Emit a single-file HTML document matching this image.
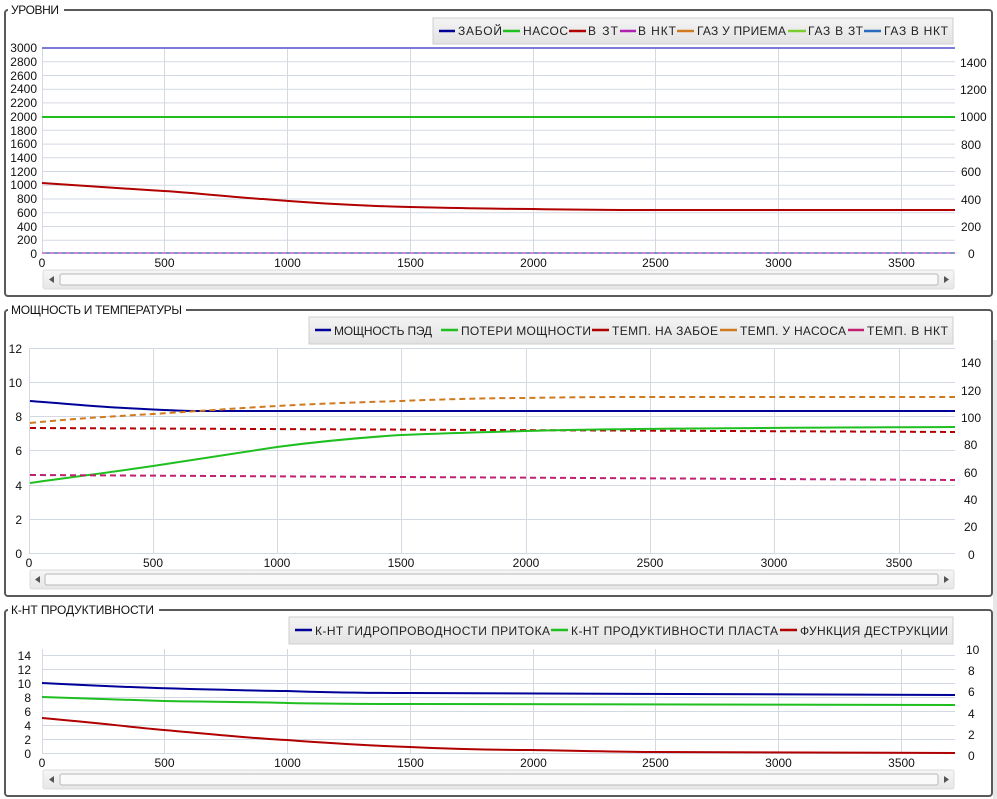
<!DOCTYPE html>
<html><head><meta charset="utf-8"><style>
html,body{margin:0;padding:0;background:#fff;}
svg{display:block;font-family:"Liberation Sans","DejaVu Sans",sans-serif;}
</style></head><body>
<svg width="997" height="799" viewBox="0 0 997 799" xmlns="http://www.w3.org/2000/svg">
<defs>
<linearGradient id="lg" x1="0" y1="0" x2="0" y2="1"><stop offset="0" stop-color="#f4f4f4"/><stop offset="1" stop-color="#e2e2e2"/></linearGradient>
<linearGradient id="sb" x1="0" y1="0" x2="0" y2="1"><stop offset="0" stop-color="#f6f6f6"/><stop offset="1" stop-color="#e6e6e6"/></linearGradient>
</defs>
<rect x="993" y="340" width="4" height="459" fill="#e8e8e8"/>

<!-- PANEL 1 -->
<rect x="5" y="10" width="987" height="286" rx="3" fill="none" stroke="#5a5a5a" stroke-width="2"/>
<rect x="8" y="2" width="56" height="14" fill="#fff"/>
<text x="11" y="14" font-size="12" fill="#111" textLength="48">УРОВНИ</text>
<g stroke="#d3d9e3" stroke-width="1">
<line x1="42" y1="61.7" x2="955" y2="61.7"/><line x1="42" y1="75.5" x2="955" y2="75.5"/><line x1="42" y1="89.2" x2="955" y2="89.2"/><line x1="42" y1="102.9" x2="955" y2="102.9"/><line x1="42" y1="130.3" x2="955" y2="130.3"/><line x1="42" y1="144.1" x2="955" y2="144.1"/><line x1="42" y1="157.8" x2="955" y2="157.8"/><line x1="42" y1="171.5" x2="955" y2="171.5"/><line x1="42" y1="185.3" x2="955" y2="185.3"/><line x1="42" y1="199" x2="955" y2="199"/><line x1="42" y1="212.7" x2="955" y2="212.7"/><line x1="42" y1="226.5" x2="955" y2="226.5"/><line x1="42" y1="240.2" x2="955" y2="240.2"/>
<line x1="164.5" y1="48" x2="164.5" y2="254"/><line x1="287.5" y1="48" x2="287.5" y2="254"/><line x1="410.5" y1="48" x2="410.5" y2="254"/><line x1="533.5" y1="48" x2="533.5" y2="254"/><line x1="655.5" y1="48" x2="655.5" y2="254"/><line x1="778.5" y1="48" x2="778.5" y2="254"/><line x1="901.5" y1="48" x2="901.5" y2="254"/>
<line x1="42.5" y1="48" x2="42.5" y2="254"/>
</g>
<line x1="42" y1="48" x2="955" y2="48" stroke="#7b7bdc" stroke-width="2"/>
<line x1="42" y1="117" x2="955" y2="117" stroke="#1fbf1f" stroke-width="2"/>
<line x1="42" y1="253" x2="955" y2="253" stroke="#4a78a8" stroke-width="1.5"/>
<line x1="42" y1="253" x2="955" y2="253" stroke="#e070e0" stroke-width="1.5" stroke-dasharray="4 4"/>
<path d="M42,183 C100,187 130,189 164,191 S240,198 263,199 C300,202 360,206 410,207 C460,208 500,209 533,209 C580,210 620,210 655,210 L955,210" fill="none" stroke="#b00000" stroke-width="2"/>
<g font-size="12" fill="#111" text-anchor="end">
<text x="37" y="52">3000</text><text x="37" y="66">2800</text><text x="37" y="80">2600</text><text x="37" y="93">2400</text><text x="37" y="107">2200</text><text x="37" y="121">2000</text><text x="37" y="135">1800</text><text x="37" y="148">1600</text><text x="37" y="162">1400</text><text x="37" y="176">1200</text><text x="37" y="189">1000</text><text x="37" y="203">800</text><text x="37" y="217">600</text><text x="37" y="231">400</text><text x="37" y="244">200</text><text x="37" y="258">0</text>
</g>
<g font-size="12" fill="#111" text-anchor="middle">
<text x="42" y="267">0</text><text x="164.5" y="267">500</text><text x="287.5" y="267">1000</text><text x="410.5" y="267">1500</text><text x="533.5" y="267">2000</text><text x="655.5" y="267">2500</text><text x="778.5" y="267">3000</text><text x="901.5" y="267">3500</text>
</g>
<g font-size="12" fill="#111">
<text x="960" y="67">1400</text><text x="960" y="94">1200</text><text x="960" y="121">1000</text><text x="961" y="149">800</text><text x="961" y="176">600</text><text x="961" y="204">400</text><text x="961" y="231">200</text><text x="968" y="258">0</text>
</g>
<rect x="43" y="270" width="911" height="19" rx="2" fill="url(#sb)" stroke="#dcdcdc"/>
<rect x="60" y="274" width="878" height="11" rx="2" fill="#fafafa" stroke="#b8b8b8"/>
<path d="M54,276 L49,279.5 L54,283 Z" fill="#555"/><path d="M944,276 L949,279.5 L944,283 Z" fill="#555"/>
<rect x="433" y="18" width="520" height="26" fill="url(#lg)" stroke="#cfcfcf"/>
<g stroke-width="2.5">
<line x1="439" y1="31" x2="455" y2="31" stroke="#000099"/><line x1="503" y1="31" x2="520" y2="31" stroke="#1fbf1f"/><line x1="569" y1="31" x2="586" y2="31" stroke="#b00000"/><line x1="620" y1="31" x2="636" y2="31" stroke="#b020b0"/><line x1="677" y1="31" x2="694" y2="31" stroke="#d07a20"/><line x1="788" y1="31" x2="806" y2="31" stroke="#7acc30"/><line x1="864" y1="31" x2="881" y2="31" stroke="#2a6aba"/>
</g>
<g font-size="12" fill="#222">
<text x="458" y="35" textLength="44">ЗАБОЙ</text><text x="523" y="35" textLength="45">НАСОС</text><text x="588" y="35" textLength="30">В ЗТ</text><text x="638" y="35" textLength="38">В НКТ</text><text x="697" y="35" textLength="89">ГАЗ У ПРИЕМА</text><text x="808" y="35" textLength="55">ГАЗ В ЗТ</text><text x="884" y="35" textLength="64">ГАЗ В НКТ</text>
</g>

<!-- PANEL 2 -->
<rect x="5" y="310" width="987" height="286" rx="3" fill="none" stroke="#5a5a5a" stroke-width="2"/>
<rect x="8" y="302" width="178" height="14" fill="#fff"/>
<text x="11" y="314" font-size="12" fill="#111" textLength="171">МОЩНОСТЬ И ТЕМПЕРАТУРЫ</text>
<g stroke="#d3d9e3" stroke-width="1">
<line x1="29" y1="348.5" x2="955" y2="348.5"/><line x1="29" y1="382.5" x2="955" y2="382.5"/><line x1="29" y1="416.5" x2="955" y2="416.5"/><line x1="29" y1="450.5" x2="955" y2="450.5"/><line x1="29" y1="485.5" x2="955" y2="485.5"/><line x1="29" y1="519.5" x2="955" y2="519.5"/>
<line x1="29.5" y1="348" x2="29.5" y2="553"/><line x1="153.5" y1="348" x2="153.5" y2="553"/><line x1="277.5" y1="348" x2="277.5" y2="553"/><line x1="401.5" y1="348" x2="401.5" y2="553"/><line x1="526.5" y1="348" x2="526.5" y2="553"/><line x1="650.5" y1="348" x2="650.5" y2="553"/><line x1="774.5" y1="348" x2="774.5" y2="553"/><line x1="899.5" y1="348" x2="899.5" y2="553"/>
</g>
<line x1="29" y1="553.5" x2="955" y2="553.5" stroke="#d3d9e3"/>
<path d="M30,401 C70,404 100,407 125,408 C160,410 180,411 200,411 L955,411" fill="none" stroke="#000099" stroke-width="2"/>
<path d="M30,423 C80,418 120,416 153,414 C200,411 240,408 277,406 C330,403 370,402 401,401 C450,399 490,398 525,398 C580,397 620,397 650,397 L955,397" fill="none" stroke="#d07a20" stroke-width="2" stroke-dasharray="6 4"/>
<path d="M30,428 L955,432" fill="none" stroke="#b00000" stroke-width="2" stroke-dasharray="6 4"/>
<path d="M30,483 C80,476 120,471 153,466 C200,459 240,453 277,447 C330,440 370,437 401,435 C450,433 490,432 525,431 C600,429 700,428 955,427" fill="none" stroke="#1fbf1f" stroke-width="2"/>
<path d="M30,475 L955,480" fill="none" stroke="#c02070" stroke-width="2" stroke-dasharray="6 4"/>
<g font-size="12" fill="#111" text-anchor="end">
<text x="22" y="353">12</text><text x="22" y="387">10</text><text x="22" y="421">8</text><text x="22" y="455">6</text><text x="22" y="490">4</text><text x="22" y="524">2</text><text x="22" y="558">0</text>
</g>
<g font-size="12" fill="#111" text-anchor="middle">
<text x="29" y="567">0</text><text x="153" y="567">500</text><text x="277" y="567">1000</text><text x="401" y="567">1500</text><text x="526" y="567">2000</text><text x="650" y="567">2500</text><text x="774" y="567">3000</text><text x="899" y="567">3500</text>
</g>
<g font-size="12" fill="#111">
<text x="961" y="367">140</text><text x="961" y="395">120</text><text x="961" y="422">100</text><text x="964" y="449">80</text><text x="964" y="477">60</text><text x="964" y="504">40</text><text x="964" y="531">20</text><text x="968" y="559">0</text>
</g>
<rect x="30" y="570" width="924" height="19" rx="2" fill="url(#sb)" stroke="#dcdcdc"/>
<rect x="45" y="574" width="893" height="11" rx="2" fill="#fafafa" stroke="#b8b8b8"/>
<path d="M40,576 L35,579.5 L40,583 Z" fill="#555"/><path d="M944,576 L949,579.5 L944,583 Z" fill="#555"/>
<rect x="309" y="317" width="644" height="27" fill="url(#lg)" stroke="#cfcfcf"/>
<g stroke-width="2.5">
<line x1="315" y1="330" x2="331" y2="330" stroke="#000099"/><line x1="441" y1="330" x2="458" y2="330" stroke="#1fbf1f"/><line x1="592" y1="330" x2="609" y2="330" stroke="#b00000"/><line x1="720" y1="330" x2="737" y2="330" stroke="#d07a20"/><line x1="848" y1="330" x2="864" y2="330" stroke="#c02070"/>
</g>
<g font-size="12" fill="#222">
<text x="334" y="335" textLength="98">МОЩНОСТЬ ПЭД</text><text x="461" y="335" textLength="130">ПОТЕРИ МОЩНОСТИ</text><text x="612" y="335" textLength="106">ТЕМП. НА ЗАБОЕ</text><text x="740" y="335" textLength="106">ТЕМП. У НАСОСА</text><text x="867" y="335" textLength="81">ТЕМП. В НКТ</text>
</g>

<!-- PANEL 3 -->
<rect x="5" y="610" width="987" height="186" rx="3" fill="none" stroke="#5a5a5a" stroke-width="2"/>
<rect x="8" y="602" width="151" height="14" fill="#fff"/>
<text x="11" y="614" font-size="12" fill="#111" textLength="143">К-НТ ПРОДУКТИВНОСТИ</text>
<g stroke="#d3d9e3" stroke-width="1">
<line x1="42" y1="655.5" x2="955" y2="655.5"/><line x1="42" y1="669.5" x2="955" y2="669.5"/><line x1="42" y1="683.5" x2="955" y2="683.5"/><line x1="42" y1="697.5" x2="955" y2="697.5"/><line x1="42" y1="711.5" x2="955" y2="711.5"/><line x1="42" y1="725.5" x2="955" y2="725.5"/><line x1="42" y1="739.5" x2="955" y2="739.5"/><line x1="42" y1="753.5" x2="955" y2="753.5"/>
<line x1="42.5" y1="649" x2="42.5" y2="754"/><line x1="164.5" y1="649" x2="164.5" y2="754"/><line x1="287.5" y1="649" x2="287.5" y2="754"/><line x1="410.5" y1="649" x2="410.5" y2="754"/><line x1="533.5" y1="649" x2="533.5" y2="754"/><line x1="655.5" y1="649" x2="655.5" y2="754"/><line x1="778.5" y1="649" x2="778.5" y2="754"/><line x1="901.5" y1="649" x2="901.5" y2="754"/>
</g>
<path d="M42,683 C100,686 150,688 190,689 C240,690 260,691 287,691 C340,693 380,693 410,693 C500,694 700,694 955,695" fill="none" stroke="#000099" stroke-width="2"/>
<path d="M42,697 C100,699 140,700 164,701 C220,702 260,702 287,703 C340,704 380,704 410,704 C500,704 700,705 955,705" fill="none" stroke="#1fbf1f" stroke-width="2"/>
<path d="M42,718 C100,723 130,727 164,730 C220,735 260,739 287,740 C340,744 380,746 410,747 C450,749 490,750 533,750 C580,751 620,752 655,752 L955,753" fill="none" stroke="#b00000" stroke-width="2"/>
<g font-size="12" fill="#111" text-anchor="end">
<text x="31" y="660">14</text><text x="31" y="674">12</text><text x="31" y="688">10</text><text x="31" y="702">8</text><text x="31" y="716">6</text><text x="31" y="730">4</text><text x="31" y="744">2</text><text x="31" y="758">0</text>
</g>
<g font-size="12" fill="#111" text-anchor="middle">
<text x="42" y="767">0</text><text x="164.5" y="767">500</text><text x="287.5" y="767">1000</text><text x="410.5" y="767">1500</text><text x="533.5" y="767">2000</text><text x="655.5" y="767">2500</text><text x="778.5" y="767">3000</text><text x="901.5" y="767">3500</text>
</g>
<g font-size="12" fill="#111">
<text x="966" y="654">10</text><text x="968" y="675">8</text><text x="968" y="696">6</text><text x="968" y="718">4</text><text x="968" y="739">2</text><text x="968" y="760">0</text>
</g>
<rect x="43" y="770" width="911" height="19" rx="2" fill="url(#sb)" stroke="#dcdcdc"/>
<rect x="60" y="774" width="878" height="11" rx="2" fill="#fafafa" stroke="#b8b8b8"/>
<path d="M54,776 L49,779.5 L54,783 Z" fill="#555"/><path d="M944,776 L949,779.5 L944,783 Z" fill="#555"/>
<rect x="289" y="617" width="664" height="27" fill="url(#lg)" stroke="#cfcfcf"/>
<g stroke-width="2.5">
<line x1="295" y1="630" x2="312" y2="630" stroke="#000099"/><line x1="551" y1="630" x2="568" y2="630" stroke="#1fbf1f"/><line x1="780" y1="630" x2="797" y2="630" stroke="#b00000"/>
</g>
<g font-size="12" fill="#222">
<text x="315" y="635" textLength="235">К-НТ ГИДРОПРОВОДНОСТИ ПРИТОКА</text><text x="571" y="635" textLength="207">К-НТ ПРОДУКТИВНОСТИ ПЛАСТА</text><text x="800" y="635" textLength="148">ФУНКЦИЯ ДЕСТРУКЦИИ</text>
</g>
</svg>
</body></html>
